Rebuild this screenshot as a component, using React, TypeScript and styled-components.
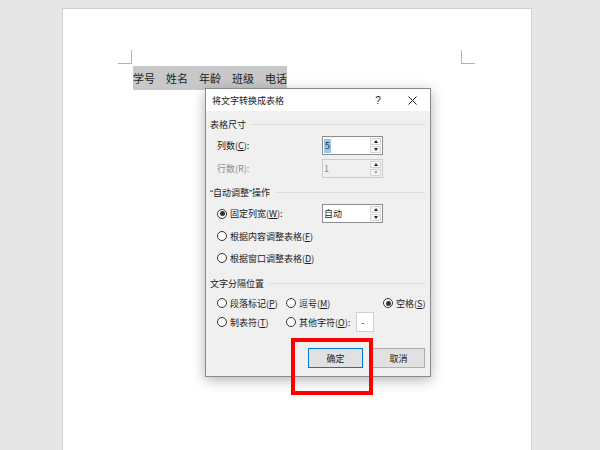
import React from 'react';
import styled, { createGlobalStyle } from 'styled-components';

const GlobalStyle = createGlobalStyle`
  html, body {
    margin: 0;
    padding: 0;
    height: 450px;
    overflow: hidden;
    background: #e6e6e6;
    font-family: "Noto Sans CJK SC", "Noto Sans", sans-serif;
  }
`;

const Workspace = styled.div`
  position: relative;
  width: 600px;
  height: 450px;
  box-sizing: border-box;
  padding: 8px 0 0 62px;
  overflow: hidden;
`;

const Page = styled.div`
  width: 470px;
  height: 460px;
  box-sizing: border-box;
  background: #ffffff;
  border: 1px solid #d2d2d2;
  padding: 41px 56px 0 55px;
`;

const MarginRow = styled.div`
  display: flex;
  justify-content: space-between;
  height: 14px;
`;

const CornerMark = styled.div<{ $side: 'left' | 'right' }>`
  width: 14px;
  height: 14px;
  box-sizing: border-box;
  border-bottom: 1px solid #b4b4b4;
  ${({ $side }) =>
    $side === 'left' ? 'border-right: 1px solid #b4b4b4;' : 'border-left: 1px solid #b4b4b4;'}
`;

const SelectedLine = styled.div`
  display: inline-block;
  margin: 1px 0 0 15px;
  height: 24px;
  line-height: 24px;
  background: #c8c8c8;
  font-size: 11px;
  color: #222;
  white-space: pre;
`;

const Dialog = styled.div`
  position: absolute;
  left: 205px;
  top: 88px;
  width: 226px;
  box-sizing: border-box;
  border: 1px solid #8a8a8a;
  background: #f0f0f0;
  box-shadow: 0 3px 12px rgba(0, 0, 0, 0.3);
  display: flex;
  flex-direction: column;
  font-size: 9px;
  color: #1a1a1a;
`;

const TitleBar = styled.div`
  height: 22px;
  background: #ffffff;
  display: flex;
  align-items: center;
  padding-left: 6px;
`;

const Title = styled.div`
  flex: 1;
`;

const HelpButton = styled.div`
  width: 28px;
  text-align: center;
  font-size: 10px;
  font-family: "Liberation Sans", sans-serif;
`;

const CloseButton = styled.div`
  width: 36px;
  margin-left: 2px;
  display: flex;
  justify-content: center;
  align-items: center;
`;

const Body = styled.div`
  display: flex;
  flex-direction: column;
  padding: 0 5px 8px 4px;
`;

const GroupHeader = styled.div<{ $mt: number }>`
  margin-top: ${({ $mt }) => $mt}px;
  height: 16px;
  display: flex;
  align-items: center;
  gap: 5px;

  &::after {
    content: '';
    flex: 1;
    height: 1px;
    background: #dcdcdc;
  }
`;

const Quote = styled.span`
  font-family: "Liberation Sans", sans-serif;
`;

const FieldRow = styled.div<{ $mt: number; $h: number }>`
  margin-top: ${({ $mt }) => $mt}px;
  height: ${({ $h }) => $h}px;
  display: flex;
  align-items: center;
  padding-left: 7px;
`;

const FieldLabel = styled.div<{ $disabled?: boolean }>`
  width: 105px;
  display: flex;
  align-items: center;
  color: ${({ $disabled }) => ($disabled ? '#8d8d8d' : '#1a1a1a')};
`;

const SpinFrame = styled.div<{ $disabled?: boolean }>`
  width: 61px;
  height: 19px;
  box-sizing: border-box;
  border: 1px solid ${({ $disabled }) => ($disabled ? '#cccccc' : '#8c8c8c')};
  background: ${({ $disabled }) => ($disabled ? '#f0f0f0' : '#ffffff')};
  display: flex;
`;

const SpinValue = styled.div<{ $disabled?: boolean }>`
  flex: 1;
  display: flex;
  align-items: center;
  padding-left: 1px;
  color: ${({ $disabled }) => ($disabled ? '#8d8d8d' : '#1a1a1a')};
`;

const Selection = styled.span`
  display: inline-block;
  height: 14px;
  line-height: 14px;
  background: #99c9ef;
  padding: 0 1px;
`;

const SpinButtons = styled.div`
  width: 11px;
  margin: 1px;
  display: flex;
  flex-direction: column;
  gap: 1px;
`;

const SpinHalf = styled.div`
  flex: 1;
  box-sizing: border-box;
  border: 1px solid #d4d4d4;
  background: #f7f7f7;
  display: flex;
  align-items: center;
  justify-content: center;
`;

const Arrow = styled.div<{ $dir: 'up' | 'down'; $dim?: boolean }>`
  width: 0;
  height: 0;
  border-left: 2.5px solid transparent;
  border-right: 2.5px solid transparent;
  ${({ $dir, $dim }) =>
    $dir === 'up'
      ? `border-bottom: 3px solid ${$dim ? '#a8a8a8' : '#222'};`
      : `border-top: 3px solid ${$dim ? '#a8a8a8' : '#222'};`}
`;

const Radio = styled.span<{ $checked?: boolean }>`
  width: 10px;
  height: 10px;
  box-sizing: border-box;
  border-radius: 50%;
  border: 1px solid #333;
  background: #fff;
  margin-right: 3px;
  flex-shrink: 0;
  display: inline-flex;
  align-items: center;
  justify-content: center;

  &::after {
    content: '';
    width: 5px;
    height: 5px;
    border-radius: 50%;
    background: ${({ $checked }) => ($checked ? '#333' : 'transparent')};
  }
`;

const OptionGrid = styled.div<{ $mt: number; $h: number }>`
  margin-top: ${({ $mt }) => $mt}px;
  height: ${({ $h }) => $h}px;
  padding-left: 7px;
  display: grid;
  grid-template-columns: 69px 97px 1fr;
  align-items: center;
`;

const Option = styled.div`
  display: flex;
  align-items: center;
  white-space: nowrap;
`;

const CharInput = styled.div`
  width: 18px;
  height: 20px;
  box-sizing: border-box;
  margin-left: 6px;
  background: #fff;
  border: 1px solid #d0d0d0;
  display: flex;
  align-items: center;
  padding-left: 4px;
`;

const ButtonRow = styled.div`
  margin-top: 16px;
  display: flex;
  justify-content: flex-end;
  gap: 9px;
`;

const DialogButton = styled.div<{ $default?: boolean; $w: number }>`
  width: ${({ $w }) => $w}px;
  height: 20px;
  box-sizing: border-box;
  border: 1px solid ${({ $default }) => ($default ? '#0078d7' : '#adadad')};
  background: #e1e1e1;
  display: flex;
  align-items: center;
  justify-content: center;
`;

const Highlight = styled.div`
  position: absolute;
  left: 291px;
  top: 338px;
  width: 82px;
  height: 57px;
  box-sizing: border-box;
  border: 4px solid #ff0000;
`;

const SpinBox: React.FC<{ value: React.ReactNode; disabled?: boolean }> = ({ value, disabled }) => (
  <SpinFrame $disabled={disabled}>
    <SpinValue $disabled={disabled}>{value}</SpinValue>
    <SpinButtons>
      <SpinHalf>
        <Arrow $dir="up" />
      </SpinHalf>
      <SpinHalf>
        <Arrow $dir="down" $dim={disabled} />
      </SpinHalf>
    </SpinButtons>
  </SpinFrame>
);

const App: React.FC = () => {
  return (
    <>
      <GlobalStyle />
      <Workspace>
        <Page>
          <MarginRow>
            <CornerMark $side="left" />
            <CornerMark $side="right" />
          </MarginRow>
          <SelectedLine>学号　姓名　年龄　班级　电话</SelectedLine>
        </Page>

        <Dialog>
          <TitleBar>
            <Title>将文字转换成表格</Title>
            <HelpButton>?</HelpButton>
            <CloseButton>
              <svg width="9" height="9" viewBox="0 0 9 9">
                <path d="M0.5 0.5 L8.5 8.5 M8.5 0.5 L0.5 8.5" stroke="#222" strokeWidth="1" />
              </svg>
            </CloseButton>
          </TitleBar>
          <Body>
            <GroupHeader $mt={5}>表格尺寸</GroupHeader>
            <FieldRow $mt={4} $h={19}>
              <FieldLabel>
                列数(<u>C</u>):
              </FieldLabel>
              <SpinBox value={<Selection>5</Selection>} />
            </FieldRow>
            <FieldRow $mt={4} $h={19}>
              <FieldLabel $disabled>行数(R):</FieldLabel>
              <SpinBox value="1" disabled />
            </FieldRow>

            <GroupHeader $mt={6}>
              <span>
                <Quote>“</Quote>自动调整<Quote>”</Quote>操作
              </span>
            </GroupHeader>
            <FieldRow $mt={4} $h={19}>
              <FieldLabel>
                <Radio $checked />
                固定列宽(<u>W</u>):
              </FieldLabel>
              <SpinBox value="自动" />
            </FieldRow>
            <FieldRow $mt={4} $h={18}>
              <Radio />
              根据内容调整表格(<u>F</u>)
            </FieldRow>
            <FieldRow $mt={4} $h={18}>
              <Radio />
              根据窗口调整表格(<u>D</u>)
            </FieldRow>

            <GroupHeader $mt={8}>文字分隔位置</GroupHeader>
            <OptionGrid $mt={3} $h={18}>
              <Option>
                <Radio />
                段落标记(<u>P</u>)
              </Option>
              <Option>
                <Radio />
                逗号(<u>M</u>)
              </Option>
              <Option>
                <Radio $checked />
                空格(<u>S</u>)
              </Option>
            </OptionGrid>
            <OptionGrid $mt={0} $h={20}>
              <Option>
                <Radio />
                制表符(<u>T</u>)
              </Option>
              <Option>
                <Radio />
                其他字符(<u>O</u>):
                <CharInput>-</CharInput>
              </Option>
            </OptionGrid>

            <ButtonRow>
              <DialogButton $default $w={55}>
                确定
              </DialogButton>
              <DialogButton $w={53}>取消</DialogButton>
            </ButtonRow>
          </Body>
        </Dialog>

        <Highlight />
      </Workspace>
    </>
  );
};

export default App;
